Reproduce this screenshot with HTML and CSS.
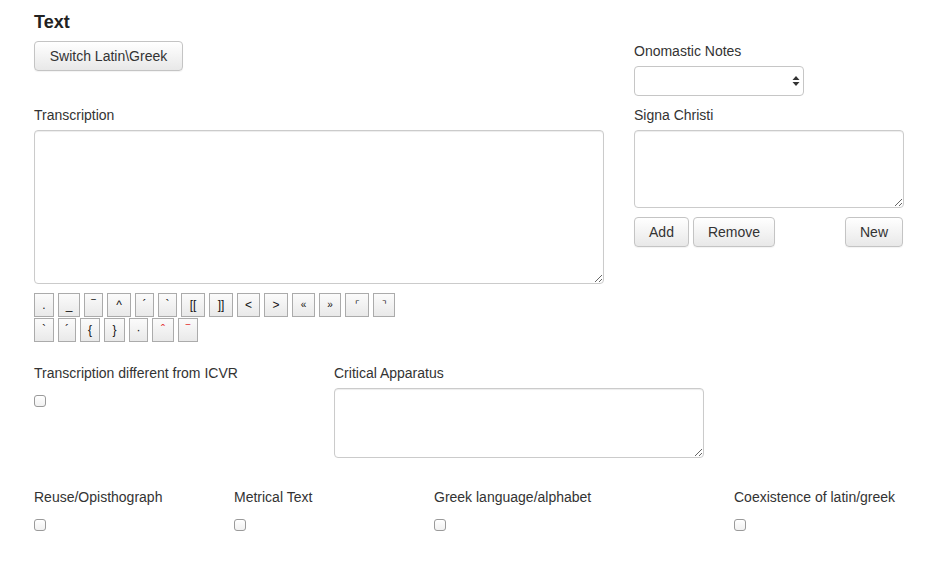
FILE: index.html
```html
<!DOCTYPE html>
<html lang="en">
<head>
<meta charset="utf-8">
<title>Text</title>
<link rel="stylesheet" href="styles.css">
</head>
<body>
<div class="page">
  <h1 class="title">Text</h1>
  <div class="row-top">
    <div class="col-main">
      <button class="btn btn-switch" type="button">Switch Latin\Greek</button>
      <div class="field field-transcription">
        <label class="lbl">Transcription</label>
        <textarea class="ta ta-transcription"></textarea>
      </div>
      <div class="charpad">
        <div class="charrow">
          <button class="ch w20" type="button">.</button>
          <button class="ch w22" type="button">_</button>
          <button class="ch w19" type="button">‾</button>
          <button class="ch w24" type="button">^</button>
          <button class="ch w19" type="button">´</button>
          <button class="ch w19" type="button">`</button>
          <button class="ch w24" type="button">[[</button>
          <button class="ch w24" type="button">]]</button>
          <button class="ch w23" type="button">&lt;</button>
          <button class="ch w24" type="button">&gt;</button>
          <button class="ch ch-small w23" type="button">«</button>
          <button class="ch ch-small w22" type="button">»</button>
          <button class="ch ch-small w24" type="button">⌜</button>
          <button class="ch ch-small w22" type="button">⌝</button>
        </div>
        <div class="charrow">
          <button class="ch w20" type="button">`</button>
          <button class="ch w18" type="button">´</button>
          <button class="ch w20" type="button">{</button>
          <button class="ch w21" type="button">}</button>
          <button class="ch w19" type="button">·</button>
          <button class="ch ch-red w22" type="button">ˆ</button>
          <button class="ch ch-red w20" type="button">‾</button>
        </div>
      </div>
    </div>
    <div class="col-side">
      <label class="lbl">Onomastic Notes</label>
      <div class="select-wrap">
        <select class="sel"><option></option></select>
        <svg class="sel-arrows" width="8" height="12" viewBox="0 0 8 12"><path d="M4 1 L7.5 5 H0.5 Z M4 11 L7.5 7 H0.5 Z" fill="#333"/></svg>
      </div>
      <div class="field field-signa">
        <label class="lbl">Signa Christi</label>
        <textarea class="ta ta-signa"></textarea>
      </div>
      <div class="signa-btns">
        <button class="btn btn-add" type="button">Add</button>
        <button class="btn btn-remove" type="button">Remove</button>
        <button class="btn btn-new" type="button">New</button>
      </div>
    </div>
  </div>

  <div class="row-mid">
    <div class="col-check">
      <label class="lbl lbl-check">Transcription different from ICVR</label>
      <input class="cb" type="checkbox">
    </div>
    <div class="col-app">
      <label class="lbl">Critical Apparatus</label>
      <textarea class="ta ta-app"></textarea>
    </div>
  </div>

  <div class="row-bottom">
    <div class="col-check">
      <label class="lbl lbl-check">Reuse/Opisthograph</label>
      <input class="cb" type="checkbox">
    </div>
    <div class="col-check">
      <label class="lbl lbl-check">Metrical Text</label>
      <input class="cb" type="checkbox">
    </div>
    <div class="col-check">
      <label class="lbl lbl-check">Greek language/alphabet</label>
      <input class="cb" type="checkbox">
    </div>
    <div class="col-check">
      <label class="lbl lbl-check">Coexistence of latin/greek</label>
      <input class="cb" type="checkbox">
    </div>
  </div>
</div>
</body>
</html>
```

FILE: styles.css
```css
* { box-sizing: border-box; }
html, body { margin: 0; padding: 0; background: #fff; }
body {
  font-family: "Liberation Sans", Arial, sans-serif;
  font-size: 14px;
  line-height: 20px;
  color: #333;
}
.page {
  width: 904px;
  padding: 12px 0 0 34px;
}
.title {
  margin: 0 0 9px;
  font-size: 18px;
  line-height: 20px;
  font-weight: bold;
  color: #222;
}
.row-top {
  display: flex;
  gap: 30px;
  align-items: flex-start;
}
.col-main { width: 570px; }
.col-side { width: 270px; }

.lbl {
  display: block;
  margin-bottom: 5px;
  font-weight: normal;
}

.btn {
  display: inline-block;
  height: 30px;
  padding: 0;
  font-family: "Liberation Sans", Arial, sans-serif;
  font-size: 14px;
  color: #333;
  background: linear-gradient(#ffffff, #e8e8e8);
  border: 1px solid #c4c4c4;
  border-radius: 4px;
  box-shadow: 0 1px 1px rgba(0,0,0,0.05);
  cursor: pointer;
}
.btn-switch { width: 149px; }

.field-transcription { margin-top: 34px; }

.ta {
  display: block;
  border: 1px solid #cbcbcb;
  border-radius: 4px;
  box-shadow: inset 0 1px 1px rgba(0,0,0,0.075);
  font-family: inherit;
  font-size: 14px;
  padding: 6px 12px;
  background: #fff;
  margin: 0;
}
.ta-transcription { width: 570px; height: 154px; }
.ta-signa { width: 270px; height: 78px; }
.ta-app { width: 370px; height: 70px; }

.charpad {
  margin-top: 9px;
  display: flex;
  flex-direction: column;
  gap: 1px;
}
.charrow {
  display: flex;
  gap: 4px;
}
.ch {
  flex: none;
  height: 24px;
  padding: 0;
  margin: 0;
  font-family: "Liberation Sans", Arial, sans-serif;
  font-size: 12px;
  line-height: 22px;
  text-align: center;
  color: #111;
  background: linear-gradient(#fbfbfb, #e9e9e9);
  border: 1px solid #ababab;
  border-radius: 0;
}
.w18 { width: 18px; }
.w19 { width: 19px; }
.w20 { width: 20px; }
.w21 { width: 21px; }
.w22 { width: 22px; }
.w23 { width: 23px; }
.w24 { width: 24px; }
.ch-small { font-size: 10px; }
.ch-red { color: #e23030; }

.select-wrap {
  position: relative;
  width: 170px;
  height: 30px;
}
.sel {
  -webkit-appearance: none;
  appearance: none;
  width: 170px;
  height: 30px;
  border: 1px solid #c6c6c6;
  border-radius: 4px;
  background: #fff;
  margin: 0;
}
.sel-arrows {
  position: absolute;
  right: 4px;
  top: 9px;
  pointer-events: none;
}

.field-signa { margin-top: 9px; }
.signa-btns {
  margin-top: 9px;
  display: flex;
  gap: 4px;
}
.btn-add { width: 55px; }
.btn-remove { width: 82px; }
.btn-new { width: 58px; margin-left: auto; margin-right: 1px; }

.row-mid {
  display: flex;
  margin-top: 21px;
}
.row-mid .col-check { width: 300px; }
.col-app { width: 370px; }

.lbl-check { margin-bottom: 12px; }

.cb {
  -webkit-appearance: none;
  appearance: none;
  display: block;
  width: 12px;
  height: 12px;
  margin: 0;
  border: 1px solid #9a9a9a;
  border-radius: 3px;
  background: linear-gradient(#fff, #f1f1f1);
}

.row-bottom {
  display: grid;
  grid-template-columns: 200px 200px 300px 170px;
  margin-top: 29px;
}
```
